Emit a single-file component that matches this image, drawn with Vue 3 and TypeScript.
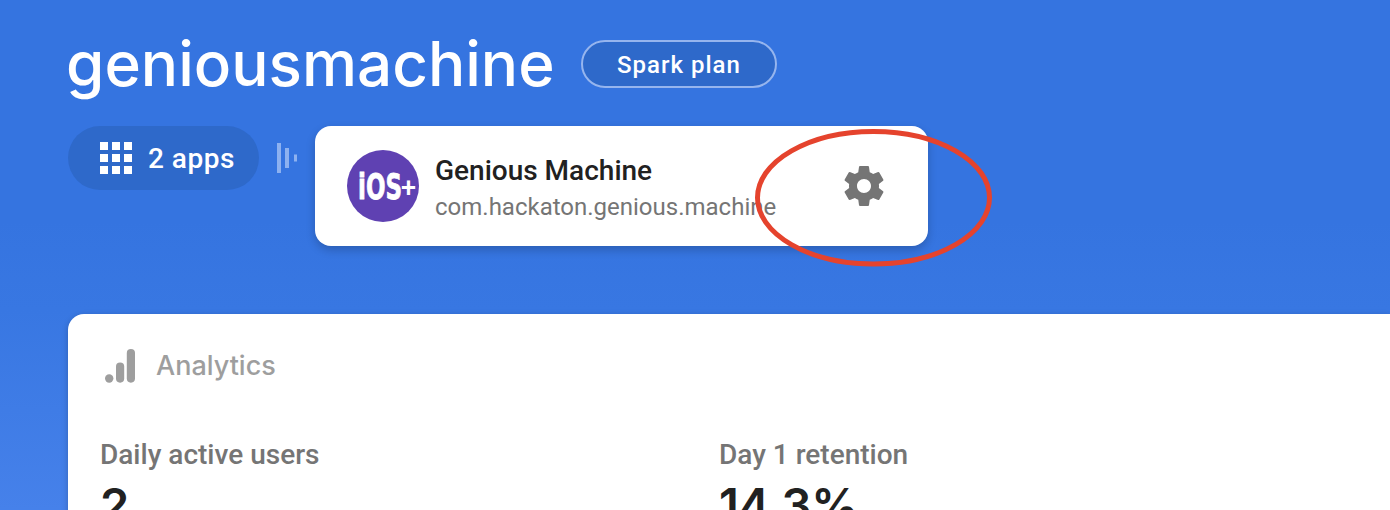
<script setup lang="ts">
interface Metric {
  label: string
  value: string
}

const metrics: Metric[] = [
  { label: 'Daily active users', value: '2' },
  { label: 'Day 1 retention', value: '14.3%' },
]

const gridCells = Array.from({ length: 9 }, (_, i) => ({
  x: (i % 3) * 12,
  y: Math.floor(i / 3) * 12,
}))
</script>

<template>
  <main class="page">
    <header class="heading">
      <h1 class="title">geniousmachine</h1>
      <button class="plan"><span>Spark plan</span></button>
    </header>

    <section class="apps">
      <button class="apps-chip">
        <svg width="32" height="32" viewBox="0 0 32 32" fill="#fff">
          <rect v-for="(c, i) in gridCells" :key="i" :x="c.x" :y="c.y" width="8" height="8" />
        </svg>
        <span>2 apps</span>
      </button>
      <svg class="divider" width="20" height="30" viewBox="0 0 20 30" fill="#8db1f0">
        <rect x="0" y="0" width="4" height="30" />
        <rect x="8" y="5" width="4" height="20" />
        <rect x="17" y="11.5" width="3" height="7" />
      </svg>
      <article class="app-card">
        <svg class="badge" width="72" height="72" viewBox="0 0 72 72">
          <circle cx="36" cy="36" r="36" fill="#5f41b2" />
          <text class="ios" x="11" y="49" textLength="44" lengthAdjust="spacingAndGlyphs">iOS</text>
          <text class="plus" x="54" y="46.5">+</text>
        </svg>
        <div class="app-text">
          <div class="app-name">Genious Machine</div>
          <div class="app-id">com.hackaton.genious.machine</div>
        </div>
        <svg class="gear" width="48" height="48" viewBox="0 0 24 24" fill="#757575">
          <path d="M19.43 12.98c.04-.32.07-.64.07-.98s-.03-.66-.07-.98l2.11-1.65c.19-.15.24-.42.12-.64l-2-3.46c-.12-.22-.39-.3-.61-.22l-2.49 1c-.52-.4-1.08-.73-1.69-.98l-.38-2.65C14.46 2.18 14.25 2 14 2h-4c-.25 0-.46.18-.49.42l-.38 2.65c-.61.25-1.17.59-1.69.98l-2.49-1c-.23-.09-.49 0-.61.22l-2 3.46c-.13.22-.07.49.12.64l2.11 1.65c-.04.32-.07.65-.07.98s.03.66.07.98l-2.11 1.65c-.19.15-.24.42-.12.64l2 3.46c.12.22.39.3.61.22l2.49-1c.52.4 1.08.73 1.69.98l.38 2.65c.03.24.24.42.49.42h4c.25 0 .46-.18.49-.42l.38-2.65c.61-.25 1.17-.59 1.69-.98l2.49 1c.23.09.49 0 .61-.22l2-3.46c.12-.22.07-.49-.12-.64l-2.11-1.65zM12 15.5c-1.93 0-3.5-1.57-3.5-3.5s1.57-3.5 3.5-3.5 3.5 1.57 3.5 3.5-1.57 3.5-3.5 3.5z" />
        </svg>
        <svg class="highlight" width="238" height="140" viewBox="0 0 238 140">
          <ellipse cx="118.5" cy="69.7" rx="116" ry="66.3" fill="none" stroke="#e5432d" stroke-width="5" />
        </svg>
      </article>
    </section>

    <section class="panel">
      <div class="panel-head">
        <svg width="32" height="34" viewBox="0 0 32 34" fill="#9e9e9e">
          <circle cx="4.2" cy="29.5" r="4.2" />
          <rect x="11" y="13.5" width="8.2" height="20.2" rx="4.1" />
          <rect x="21.8" y="0" width="8.2" height="33.7" rx="4.1" />
        </svg>
        <span>Analytics</span>
      </div>
      <div class="metrics">
        <div v-for="m in metrics" :key="m.label" class="metric">
          <div class="metric-label">{{ m.label }}</div>
          <div class="metric-value">{{ m.value }}</div>
        </div>
      </div>
    </section>
  </main>
</template>

<style>
body {
  margin: 0;
  overflow: hidden;
}
</style>

<style scoped>
.page {
  box-sizing: border-box;
  width: 1390px;
  height: 510px;
  padding: 32px 0 0 68px;
  overflow: hidden;
  background: linear-gradient(#3574e0 0, #3574e0 220px, #3877e2 310px, #4681ea 510px);
  font-family: Roboto, 'Liberation Sans', sans-serif;
}

button {
  border: 0;
  margin: 0;
  font: inherit;
  color: #fff;
}

.heading {
  display: flex;
  height: 94px;
}

.title {
  width: 515px;
  margin: 0 0 0 -2px;
  color: #fff;
  font: 500 62px/64px Inter, sans-serif;
  white-space: nowrap;
}

.plan {
  box-sizing: border-box;
  width: 196px;
  height: 48px;
  margin-top: 8px;
  padding: 2px 0 0;
  border: 2px solid #96b5ee;
  border-radius: 24px;
  background: #2e69ca;
  font-size: 24px;
  font-weight: 500;
  letter-spacing: 1px;
}

.apps {
  display: flex;
  height: 188px;
  align-items: flex-start;
}

.apps-chip {
  box-sizing: border-box;
  display: flex;
  align-items: center;
  gap: 16px;
  width: 191px;
  height: 64px;
  padding: 0 0 0 32px;
  border-radius: 32px;
  background: #2e69ca;
  font-size: 28px;
  font-weight: 500;
  letter-spacing: 0.5px;
}

.divider {
  margin: 17px 18px 0;
}

.app-card {
  position: relative;
  box-sizing: border-box;
  display: flex;
  width: 613px;
  height: 120px;
  padding: 24px 32px;
  border-radius: 16px;
  background: #fff;
  box-shadow: 0 4px 10px rgba(0, 0, 0, 0.2);
}

.badge {
  flex: none;
  fill: #fff;
}

.ios {
  font: 700 35px 'DejaVu Sans', sans-serif;
  stroke: #fff;
  stroke-width: 0.8px;
}

.plus {
  font: 500 27px Roboto, sans-serif;
}

.app-text {
  flex: 1;
  margin-left: 16px;
  padding-top: 1px;
}

.app-name {
  color: #212121;
  font-size: 28px;
  font-weight: 500;
  line-height: 40px;
}

.app-id {
  color: #757575;
  font-size: 24px;
  line-height: 32px;
}

.gear {
  margin: 12px 8px 0 0;
}

.highlight {
  position: absolute;
  left: 440px;
  top: 2px;
}

.panel {
  box-sizing: border-box;
  height: 260px;
  padding: 32px 0 0 32px;
  border-radius: 16px 0 0 0;
  background: #fff;
  box-shadow: 0 2px 6px rgba(0, 0, 0, 0.22);
}

.panel-head {
  display: flex;
  gap: 19px;
  height: 89px;
  padding-left: 5px;
  color: #9e9e9e;
  font: 500 27px/40px Inter, sans-serif;
}

.panel-head svg {
  margin-top: 3px;
}

.metrics {
  display: grid;
  grid-template-columns: 619px 1fr;
}

.metric-label {
  color: #757575;
  font-size: 28px;
  font-weight: 500;
  line-height: 40px;
}

.metric-value {
  color: #212121;
  font: 600 47px/60px Inter, sans-serif;
  letter-spacing: -0.3px;
}
</style>
